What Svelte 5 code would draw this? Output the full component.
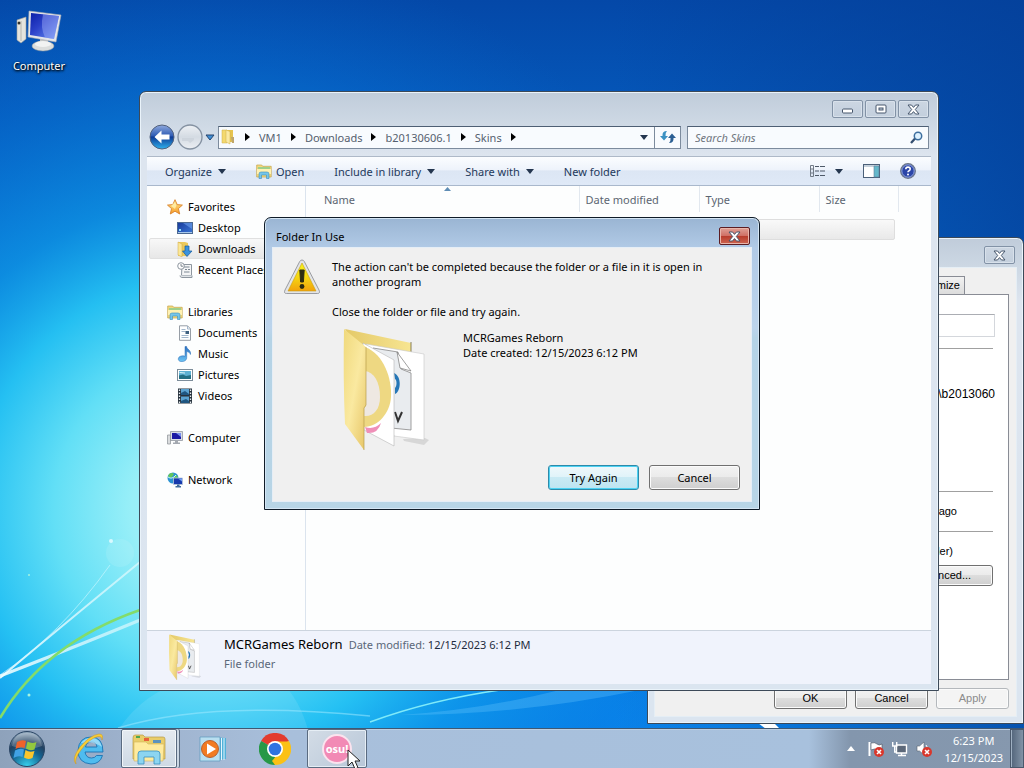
<script lang="ts">
	const crumbs = ['VM1', 'Downloads', 'b20130606.1', 'Skins'];

	const places = [
		{ label: 'Favorites', icon: 'star', items: [
			{ label: 'Desktop', icon: 'desktop' },
			{ label: 'Downloads', icon: 'downloads' },
			{ label: 'Recent Places', icon: 'recent' }
		] },
		{ label: 'Libraries', icon: 'library', items: [
			{ label: 'Documents', icon: 'document' },
			{ label: 'Music', icon: 'music' },
			{ label: 'Pictures', icon: 'picture' },
			{ label: 'Videos', icon: 'video' }
		] },
		{ label: 'Computer', icon: 'computer', items: [] },
		{ label: 'Network', icon: 'network', items: [] }
	];

	let selected = $state('Downloads');
	let query = $state('');
	let folderName = $state('');
</script>

{#snippet caret()}
	<svg class="caret" width="8" height="5" viewBox="0 0 8 5"><path d="M0 0h8L4 5z" fill="currentColor" /></svg>
{/snippet}

{#snippet cross()}
	<svg width="13" height="11" viewBox="0 0 13 11">
		<path d="M1 1h3.500l2 2.400L8.500 1H12L8.300 5.500 12 10H8.500l-2-2.400L4.500 10H1l3.700-4.500z" fill="#fff" stroke="#46566c" stroke-width="1" />
	</svg>
{/snippet}

{#snippet icon(name: string)}
	<svg class="icon" width="16" height="16" viewBox="0 0 16 16">
		{#if name === 'star'}
			<path d="M8 .7l2.200 4.900 5.200.5-4 3.500 1.300 5.400L8 12.200 3.300 15l1.200-5.400-4-3.500 5.300-.5z" fill="url(#g-star)" stroke="#d9822b" stroke-width=".9" />
			<path d="M8 3l1.400 3.500L8 10 4 7z" fill="#fff3b0" opacity=".8" />
		{:else if name === 'desktop'}
			<rect x=".5" y="2.500" width="15" height="11" fill="url(#g-screen)" stroke="#4c6a92" />
			<path d="M1 12h14v1H1z" fill="#a8c8ea" /><path d="M2 9h2v2H2z" fill="#8fe3ff" />
			<path d="M6 3h9v6z" fill="#6fa4ee" opacity=".6" />
		{:else if name === 'downloads'}
			<path d="M1 1h7l3 1v13H1z" fill="#ecc95a" /><path d="M1 1l4 2v13l-4-2z" fill="#fbe797" stroke="#cda640" stroke-width=".5" />
			<path d="M8 5h4v5h3l-5 5.500L5.500 10H8z" fill="#3a92dd" stroke="#155c9f" stroke-width=".7" />
		{:else if name === 'recent'}
			<path d="M5 2.500h9.500v11H4.500z" fill="#f4f5f6" stroke="#8d969f" />
			<path d="M6.500 5h6M8 7.500h2M11 7.500h2M7 10h5.500" stroke="#7c8893" />
			<circle cx="4" cy="4" r="3.300" fill="#fff" stroke="#8d969f" /><path d="M4 2v2.200h2" fill="none" stroke="#5f6a74" stroke-width=".8" />
			<path d="M3 13.500c0 2 2 2 2 2h10v-2" fill="#dfe3e7" stroke="#8d969f" />
		{:else if name === 'library'}
			<path d="M.7 2h5l1 1.300h8.500V14H.7z" fill="#f4da7e" stroke="#c3a34a" stroke-width=".7" />
			<path d="M2 4h12v2H2z" fill="#9fd08b" /><path d="M1 6h14v5H1z" fill="#fff1b2" />
			<path d="M3 15.500V11q0-2 2-2h6q2 0 2 2v4.500h-2.500V12h-5v3.500z" fill="#77c6e9" stroke="#3b8dbd" stroke-width=".6" />
		{:else if name === 'document'}
			<path d="M2.500 .8h8l3 3v11.500h-11z" fill="#fff" stroke="#8b939c" stroke-width=".9" />
			<path d="M10.500 1v3h3M4.500 4.500h4M4.500 6.500h4M4.500 10.500h7M4.500 12.500h7" fill="none" stroke="#8ba5bf" stroke-width=".8" />
			<path d="M8.500 6h3.500v3H8.500z" fill="#3f607f" />
		{:else if name === 'music'}
			<path d="M8 .5h1.600c.2 3 4.900 3.500 3.800 8-.5-2-2.200-2.800-3.700-3v6.300c0 4.600-8.400 5.200-8.400 1.200 0-2.800 4-3.800 6.700-2.700z" fill="url(#g-note)" stroke="#2a6cb4" stroke-width=".5" />
		{:else if name === 'picture'}
			<rect x=".5" y="2.500" width="15" height="11" fill="#fff" stroke="#7d8d9a" />
			<path d="M2 4h12v8H2z" fill="#5fb1d2" /><path d="M2 8.500l4-1 3 1.500 5-1V12H2z" fill="#246f83" /><path d="M3 5l5 .5v1L2 6z" fill="#d8f2f7" />
		{:else if name === 'video'}
			<path d="M1 .5h14v15H1z" fill="#26323d" /><path d="M4 1h8v6H4zM4 8.500h8V15H4z" fill="#5ba3d1" />
			<path d="M4 5l4-2 4 3v1H4zM4 13l5-2 3 2v2H4z" fill="#1f5680" />
			<path d="M2.500 1.500v14M13.500 1.500v14" stroke="#e7edf2" stroke-width="1.300" stroke-dasharray="1.500 1.500" />
		{:else if name === 'computer'}
			<path d="M.5 5h3v9h-3z" fill="#dadcde" stroke="#8b9096" stroke-width=".7" />
			<path d="M3.500 1.500h12v9h-12z" fill="#d9dde4" stroke="#868c96" stroke-width=".7" /><path d="M5 3h9v6H5z" fill="#1b1aa4" /><path d="M9 3h5v4z" fill="#7990ef" />
			<path d="M8 10.500h3v2h2v1.500H6v-1.500h2z" fill="#a4a9b1" />
		{:else if name === 'network'}
			<circle cx="6" cy="6" r="5.500" fill="#2b93d3" /><path d="M2 2q3-2 5 0L5 5 3 6 1 5zM6 5l4-2 1 4-4 3z" fill="#63c65b" />
			<path d="M1 5q4 3 8-2" fill="none" stroke="#c6f2ff" />
			<path d="M6.500 6h9v6.500h-9z" fill="#1639ad" stroke="#bac8da" stroke-width=".8" /><path d="M11 6.500h4v3z" fill="#6f9cf2" /><path d="M10 12.500h2.500V14H14v1.500H8.500V14H10z" fill="#406b9c" />
		{:else if name === 'folder'}
			<path d="M2 1h5v13H2z" fill="#f3d96f" stroke="#cfae49" stroke-width=".5" /><path d="M7 1h6v12H7z" fill="#e6c44f" />
			<path d="M6 1l4 1.500v12.500l-4-2z" fill="#fbeaa2" stroke="#cfae49" stroke-width=".5" /><path d="M11 8h3v6h-2z" fill="#bfa66a" />
		{/if}
	</svg>
{/snippet}

{#snippet bigFolder(cls: string)}
	<svg class={cls} viewBox="0 0 86 122">
		<path d="M60 111l22-1 4 2-5 5-20-4z" fill="#000" opacity=".1" />
		<path d="M2 1l66 14v14L20 30z" fill="url(#g-fold-back)" />
		<path d="M68 14v12" stroke="#6d6337" stroke-width=".8" />
		<path d="M23 16l58 10v86l-30-4z" fill="#fff" stroke="#c8c8c8" stroke-width=".6" />
		<path d="M30 20l25 4 3 17 10 4v57l-20-2z" fill="#e9ecef" stroke="#888" stroke-width=".8" />
		<path d="M54 24l14 19-11-3z" fill="#fff" stroke="#777" stroke-width=".7" />
		<path d="M51 45c8 3 7 19 1 21v-6c2-2 2-8 0-9z" fill="#2677b7" />
		<path d="M52 84l3 9 4-9" fill="none" stroke="#333" stroke-width="2" />
		<path d="M20 15l31 17v86l-30-16z" fill="#fff" stroke="#b7b7b7" stroke-width=".6" />
		<path d="M22 19c19 7 27 32 26 50-1 16-13 30-27 30z" fill="#eed882" />
		<path d="M22 43c9 1 15 11 15 26 0 13-7 20-16 19z" fill="#eee8e2" />
		<path d="M22 99q9 3 16-4-3 11-14 10z" fill="#ef8fb8" />
		<path d="M1 1l22 18v59l-2 2v42L2 96Q0 50 1 1z" fill="url(#g-fold-front)" />
		<path d="M23 19v58l-2 3v42" fill="none" stroke="#b89f4c" stroke-width=".7" />
	</svg>
{/snippet}

<main class="desktop">
	<svg class="wallpaper" viewBox="0 0 1024 768" preserveAspectRatio="none">
		<defs>
			<linearGradient id="g-sky" x1="0" y1="0" x2="0" y2="1">
				<stop offset="0" stop-color="#0448a8" />
				<stop offset=".3" stop-color="#0668cc" />
				<stop offset=".6" stop-color="#0b8ee6" />
				<stop offset="1" stop-color="#0a8cf8" />
			</linearGradient>
			<radialGradient id="g-glow" cx="210" cy="510" r="560" gradientUnits="userSpaceOnUse">
				<stop offset="0" stop-color="#a2f0fa" />
				<stop offset=".14" stop-color="#98eff8" />
				<stop offset=".28" stop-color="#62dff6" />
				<stop offset=".42" stop-color="#26c3f3" stop-opacity=".95" />
				<stop offset=".56" stop-color="#0f98e6" stop-opacity=".7" />
				<stop offset=".8" stop-color="#0670d4" stop-opacity=".4" />
				<stop offset="1" stop-color="#0664c6" stop-opacity="0" />
			</radialGradient>
			<linearGradient id="g-right" x1="0" x2="1">
				<stop offset=".6" stop-color="#043f98" stop-opacity="0" />
				<stop offset="1" stop-color="#043f98" stop-opacity=".75" />
			</linearGradient>
			<linearGradient id="g-beam" x1="0" x2="1"><stop offset="0" stop-color="#f0fdff" stop-opacity=".9" /><stop offset="1" stop-color="#fff" stop-opacity=".5" /></linearGradient>
			<linearGradient id="g-star" x1="0" y1="0" x2="0" y2="1"><stop offset="0" stop-color="#ffec91" /><stop offset="1" stop-color="#f79b26" /></linearGradient>
			<linearGradient id="g-screen" x1="0" y1="0" x2="1" y2="1"><stop offset="0" stop-color="#173a9b" /><stop offset="1" stop-color="#3c78d8" /></linearGradient>
			<linearGradient id="g-note" x1="0" y1="0" x2="0" y2="1"><stop offset="0" stop-color="#2d6fbf" /><stop offset="1" stop-color="#6cc4f5" /></linearGradient>
			<linearGradient id="g-fold-front" x1="0" y1="0" x2="1" y2="1"><stop offset="0" stop-color="#f0d97c" /><stop offset=".5" stop-color="#fae9a0" /><stop offset="1" stop-color="#e6c465" /></linearGradient>
			<linearGradient id="g-fold-back" x1="0" y1="0" x2="1" y2="0"><stop offset="0" stop-color="#e4c968" /><stop offset="1" stop-color="#f7e592" /></linearGradient>
			<linearGradient id="g-monitor" x1="0" y1="0" x2="1" y2="1"><stop offset="0" stop-color="#0a1fa8" /><stop offset=".4" stop-color="#2a40c8" /><stop offset="1" stop-color="#6d92f4" /></linearGradient>
			<radialGradient id="g-orb" cx=".5" cy="1" r=".95"><stop offset="0" stop-color="#38d4f0" /><stop offset=".5" stop-color="#14628f" /><stop offset=".75" stop-color="#23405f" /><stop offset="1" stop-color="#8fa6ba" /></radialGradient>
			<linearGradient id="g-back" x1="0" y1="0" x2="0" y2="1"><stop offset="0" stop-color="#8fa9dd" /><stop offset=".45" stop-color="#2f5cb4" /><stop offset=".5" stop-color="#0e3a95" /><stop offset="1" stop-color="#2fb2ee" /></linearGradient>
			<linearGradient id="g-fwd" x1="0" y1="0" x2="0" y2="1"><stop offset="0" stop-color="#eef1f5" /><stop offset=".5" stop-color="#d4dbe3" /><stop offset="1" stop-color="#eceff3" /></linearGradient>
			<linearGradient id="g-warn" x1="0" y1="0" x2="0" y2="1"><stop offset="0" stop-color="#f8f51c" /><stop offset=".5" stop-color="#f5d713" /><stop offset="1" stop-color="#f2a20c" /></linearGradient>
		</defs>
		<rect width="1024" height="768" fill="url(#g-sky)" />
		<rect width="1024" height="768" fill="url(#g-glow)" />
		<rect width="1024" height="768" fill="url(#g-right)" />
		<path d="M118 730Q145 690 190 680H280Q300 700 308 730z" fill="#fff" opacity=".1" />
		<path d="M0 678Q45 640 140 562" fill="none" stroke="url(#g-beam)" stroke-width="2" />
		<path d="M0 675Q60 635 110 565" fill="none" stroke="#d5f8ff" stroke-width="1" opacity=".6" />
		<path d="M0 676Q80 645 145 618" fill="none" stroke="url(#g-beam)" stroke-width="3" />
		<path d="M0 718Q45 643 140 610" fill="none" stroke="#83dc6a" stroke-width="2.500" />
		<path d="M118 728Q210 700 370 716" fill="none" stroke="#a5ecff" stroke-width="1.500" opacity=".5" />
		<path d="M370 722Q430 700 500 690" fill="none" stroke="#7feaf9" stroke-width="1.500" />
		<path d="M400 715Q520 715 640 690H560Q480 710 400 715z" fill="#6cc9ff" opacity=".3" />
		<path d="M758 723h16l6 6h-14z" fill="#fff" />
		<circle cx="111" cy="541" r="2" fill="#d8faff" /><circle cx="29" cy="575" r="1" fill="#a5f3e0" /><circle cx="29" cy="695" r="1.500" fill="#a5f3e0" /><circle cx="120" cy="553" r="14" fill="#fff" opacity=".1" />
	</svg>

	<a class="shortcut" href="#computer">
		<svg width="46" height="42" viewBox="0 0 46 42">
			<path d="M1 10l9-3v22l-5 4-4-3z" fill="#e5e4dd" stroke="#9fa19e" stroke-width=".6" /><path d="M5 11v20" stroke="#b6b6af" /><circle cx="3" cy="13" r="1.500" fill="#31322e" />
			<ellipse cx="27" cy="36" rx="11" ry="5" fill="#dcdedd" stroke="#989c9b" stroke-width=".5" /><path d="M24 27h8v9h-8z" fill="#c2c5c5" /><ellipse cx="27" cy="34" rx="8" ry="3" fill="#f2f3f2" />
			<path d="M13 1l32 4-5 27-28-5z" fill="#e4e6ea" stroke="#a7abb3" stroke-width=".6" /><path d="M15 3l28 3-5 23-24-4z" fill="url(#g-monitor)" /><path d="M27 4.300l16 1.700-5 23-9-1.500q-5-10-2-23z" fill="#aebcff" opacity=".4" />
		</svg>
		<span>Computer</span>
	</a>

	<section class="window properties">
		<div class="caption"><button class="frame-button" aria-label="Close properties">{@render cross()}</button></div>
		<div class="prop-body">
			<div class="tabs"><button>Customize</button></div>
			<div class="tab-page">
				<input aria-label="Folder name" bind:value={folderName} />
				<hr />
				<p class="location">Downloads\b2013060</p>
				<hr />
				<p class="created">5 minutes ago</p>
				<hr />
				<p class="attributes">in folder)</p>
				<button class="push advanced">Advanced...</button>
			</div>
			<div class="prop-buttons">
				<button class="push">OK</button>
				<button class="push">Cancel</button>
				<button class="push" disabled>Apply</button>
			</div>
		</div>
	</section>

	<section class="window explorer">
		<div class="caption">
			<button class="frame-button" aria-label="Minimize"><svg width="13" height="9" viewBox="0 0 13 9"><rect x="1.500" y="4" width="10" height="4" rx="1" fill="#fff" stroke="#46566c" /></svg></button>
			<button class="frame-button" aria-label="Maximize"><svg width="12" height="10" viewBox="0 0 12 10"><rect x="1" y="1" width="10" height="8" rx="1" fill="#fff" stroke="#46566c" /><rect x="4" y="4" width="4" height="2" fill="#c7d3e0" stroke="#46566c" /></svg></button>
			<button class="frame-button" aria-label="Close">{@render cross()}</button>
		</div>

		<div class="nav-row">
			<button class="round" aria-label="Back">
				<svg width="26" height="26" viewBox="0 0 26 26"><circle cx="13" cy="13" r="12" fill="url(#g-back)" stroke="#52617c" /><path d="M5.500 13l7-6.500v4h8v5h-8v4z" fill="#fff" /></svg>
			</button>
			<button class="round" aria-label="Forward">
				<svg width="26" height="26" viewBox="0 0 26 26"><circle cx="13" cy="13" r="12" fill="url(#g-fwd)" stroke="#8592a2" stroke-width="1.300" /><path d="M5 14h12v2l-4 3-2-2H5z" fill="#c9d0d8" opacity=".7" /></svg>
			</button>
			<button class="recent-pages" aria-label="Recent pages"><svg width="10" height="7" viewBox="0 0 10 7"><path d="M1 1h8L5 6z" fill="#3f8fd6" stroke="#26456e" /></svg></button>
			<div class="address">
				{@render icon('folder')}
				<svg class="chevron" width="5" height="8" viewBox="0 0 5 8"><path d="M0 0l5 4-5 4z" /></svg>
				{#each crumbs as crumb}
					<button>{crumb}</button>
					<svg class="chevron" width="5" height="8" viewBox="0 0 5 8"><path d="M0 0l5 4-5 4z" /></svg>
				{/each}
				<button class="history" aria-label="Previous locations">{@render caret()}</button>
				<button class="refresh" aria-label="Refresh">
					<svg width="16" height="14" viewBox="0 0 16 14"><path d="M7 1Q2 1 2.500 6H0l4 4.500L8 6H5.500Q5 3 7 1z" fill="#3b91c2" /><path d="M9 13q5 0 4.500-5H16l-4-4.500L8 8h2.500q.5 3-1.500 5z" fill="#2b5f93" /></svg>
				</button>
			</div>
			<div class="search">
				<input aria-label="Search Skins" placeholder="Search Skins" bind:value={query} />
				<svg width="13" height="13" viewBox="0 0 13 13"><path d="M1 12l4.500-5" stroke="#344e70" stroke-width="2.300" /><circle cx="8" cy="5" r="3.700" fill="#dff2ff" stroke="#3e6f9f" stroke-width="1.500" /></svg>
			</div>
		</div>

		<div class="toolbar">
			<button>Organize {@render caret()}</button>
			<button class="open">{@render icon('library')} Open</button>
			<button>Include in library {@render caret()}</button>
			<button>Share with {@render caret()}</button>
			<button>New folder</button>
			<div class="view-tools">
				<button aria-label="Change your view"><svg width="16" height="14" viewBox="0 0 16 14"><path d="M1.500 1.500h3v11h-3zM1.500 5h3M1.500 9h3" fill="none" stroke="#727b87" /><path d="M6 2.500h4M11 2.500h5M6 7h4M11 7h5M6 11.500h4M11 11.500h5" stroke="#4e5968" /></svg></button>
				<button aria-label="More view options">{@render caret()}</button>
				<button aria-label="Show the preview pane"><svg width="17" height="14" viewBox="0 0 17 14"><rect x=".5" y=".5" width="16" height="13" fill="#fff" stroke="#4b6079" /><path d="M1 2h15" stroke="#8ba2b8" /><path d="M11 2h5v11h-5z" fill="#65b8cb" stroke="#5f829b" stroke-width=".6" /></svg></button>
				<button aria-label="Get help"><svg width="16" height="16" viewBox="0 0 16 16"><circle cx="8" cy="8" r="7.300" fill="#2b45a8" stroke="#6c7789" stroke-width="1.300" /><circle cx="8" cy="8" r="6.200" fill="none" stroke="#a9bbe8" stroke-width=".8" /><path d="M5.800 6.300q0-2.200 2.200-2.200t2.200 1.900q0 1.300-1.400 1.900-.8.400-.8 1.400" fill="none" stroke="#fff" stroke-width="1.600" /><circle cx="8" cy="11.600" r="1" fill="#fff" /></svg></button>
			</div>
		</div>

		<div class="content">
			<nav>
				{#each places as place}
					<div class="group">
						<a class="place" href="#{place.icon}">{@render icon(place.icon)}{place.label}</a>
						{#each place.items as item}
							<a class="place child" class:selected={selected === item.label} href="#{item.icon}" onclick={() => (selected = item.label)}>
								{@render icon(item.icon)}{item.label}
							</a>
						{/each}
					</div>
				{/each}
			</nav>
			<div class="files">
				<svg class="sort" width="7" height="4" viewBox="0 0 7 4"><path d="M0 4l3.500-4L7 4z" fill="#5f8db5" /></svg>
				<table>
					<thead>
						<tr><th class="name">Name</th><th class="medium">Date modified</th><th class="medium">Type</th><th class="size">Size</th></tr>
					</thead>
					<tbody>
						<tr><td colspan="4"><div class="row"></div></td></tr>
					</tbody>
				</table>
			</div>
		</div>

		<footer class="details">
			{@render bigFolder('details-thumb')}
			<div>
				<p><strong>MCRGames Reborn</strong><span>Date modified:</span> <b>12/15/2023 6:12 PM</b></p>
				<p>File folder</p>
			</div>
		</footer>
	</section>

	<section class="dialog" role="dialog" aria-labelledby="dialog-title">
		<header>
			<h1 id="dialog-title">Folder In Use</h1>
			<button class="close" aria-label="Close dialog">{@render cross()}</button>
		</header>
		<div class="dialog-body">
			<div class="message">
				<svg width="38" height="36" viewBox="0 0 38 36">
					<path d="M19 1q1.500 0 2.300 1.500L36 31q1.500 3.500-1.500 3.500h-31Q.5 34.500 2 31L16.700 2.500Q17.500 1 19 1z" fill="#e3e4e6" stroke="#85888e" stroke-width=".8" />
					<path d="M19 4l14 28H5z" fill="url(#g-warn)" stroke="#c9a010" stroke-width=".6" />
					<path d="M16.800 11h4.400l-.8 12h-2.800z" fill="#2d2c12" stroke="#2d2c12" /><circle cx="19" cy="27.500" r="2.400" fill="#2d2c12" />
				</svg>
				<div>
					<p>The action can't be completed because the folder or a file in it is open in another program</p>
					<p>Close the folder or file and try again.</p>
				</div>
			</div>
			<div class="subject">
				{@render bigFolder('dialog-thumb')}
				<p>MCRGames Reborn<br />Date created: 12/15/2023 6:12 PM</p>
			</div>
			<div class="actions">
				<button class="push default">Try Again</button>
				<button class="push">Cancel</button>
			</div>
		</div>
	</section>

	<footer class="taskbar">
		<button class="start" aria-label="Start">
			<svg width="38" height="38" viewBox="0 0 38 38">
				<circle cx="19" cy="19" r="17.500" fill="url(#g-orb)" stroke="#2a4564" /><path d="M4 16Q6 3 19 3t15 13Q19 22 4 16z" fill="#fff" opacity=".22" />
				<path d="M9 12q5-3 9-1l-1.500 7q-4.500-2-9 1z" fill="#f0622a" /><path d="M19.500 11.500q4 2.500 9 .5l-2 7.500q-4.500 2-8.500-1z" fill="#93c83e" />
				<path d="M7 20.500q5-3 9-1L14.500 27q-4-2-9 1z" fill="#41a2e4" /><path d="M17.500 20q4 3 9 1l-2 7q-5 2-8.500-.5z" fill="#fbc52c" />
			</svg>
		</button>
		<button class="task" aria-label="Internet Explorer">
			<svg width="32" height="32" viewBox="0 0 32 32">
				<path d="M30 19H12q1 6 6.500 6 3.500 0 5-2.500h6Q27 31 18 31 5 30 5 17.500 6 4 18 4q12 0 12 15zM12.500 14H24q-.5-5-5.500-5-5 0-6 5z" fill="#4fbcef" stroke="#1c73b2" stroke-width=".9" fill-rule="evenodd" />
				<path d="M8 10Q12 5 18 5q9 0 11 9-8-6-21-4z" fill="#c6ecfb" opacity=".6" />
				<path d="M3 31Q-2 26 7 14 17 2 26 1q5 0 3 6 0-4-4-3.500Q17 5 8 17q-7 9-5 14z" fill="#f7cd35" stroke="#ce9420" stroke-width=".5" />
			</svg>
		</button>
		<button class="task active stacked" aria-label="Windows Explorer">
			<svg width="34" height="32" viewBox="0 0 34 32">
				<path d="M1 5q0-3 2-3h8l2 2h18q2 0 2 2v20H1z" fill="#e9cd69" stroke="#b79b48" stroke-width=".7" /><path d="M4 3h4v2H4z" fill="#4ea650" /><path d="M12 5h5v3h-5z" fill="#e8613a" /><path d="M21 7h8v3h-8z" fill="#5d93bd" />
				<path d="M2 9h12l2 2h16l-1 17H2z" fill="#ffeb9e" stroke="#d1b45b" stroke-width=".6" />
				<path d="M6 31V21q0-3 3-3h16q3 0 3 3v10h-6v-7H12v7z" fill="#8cd5f1" stroke="#378fc0" stroke-width=".8" />
			</svg>
		</button>
		<button class="task" aria-label="Windows Media Player">
			<svg width="28" height="26" viewBox="0 0 28 26">
				<path d="M8 1l19 1v21l-19 2z" fill="#51b1d9" /><path d="M22.500 2v22M25 2v22" stroke="#e5f7ff" /><path d="M1 1h20v24H1z" fill="#b9dff0" stroke="#5b9abd" stroke-width=".7" />
				<circle cx="11" cy="13" r="8.500" fill="#f27b21" stroke="#b9612e" /><path d="M8 7.500l9 5.500-9 5.500z" fill="#fff" />
			</svg>
		</button>
		<button class="task" aria-label="Google Chrome">
			<svg width="32" height="32" viewBox="0 0 32 32">
				<path d="M16 16L2.100 8A16 16 0 0 1 29.900 8z" fill="#e33b2e" /><path d="M16 16l13.900-8A16 16 0 0 1 16 32z" fill="#fbc116" /><path d="M16 16v16A16 16 0 0 1 2.100 8z" fill="#279847" />
				<path d="M16 8.500h14L27 14H16z" fill="#fbc116" /><path d="M9.500 20L3 9l4 2 6 12z" fill="#279847" /><path d="M22.500 20L16 31.900l-3-4 5-6z" fill="#fbc116" />
				<circle cx="16" cy="16" r="8" fill="#fff" /><circle cx="16" cy="16" r="6.300" fill="#2f73e1" />
			</svg>
		</button>
		<button class="task active osu"><span>osu!</span></button>
		<div class="tray">
			<svg width="8" height="5" viewBox="0 0 8 5"><path d="M0 5l4-5 4 5z" fill="#fff" /></svg>
			<svg width="16" height="16" viewBox="0 0 16 16"><path d="M1.500 1v14" stroke="#fff" stroke-width="2" /><path d="M3 2q4-1 6 1t5 0v6q-3 2-5 0T3 9z" fill="#fff" stroke="#4a5360" stroke-width=".6" /><circle cx="11" cy="11" r="5" fill="#d9372c" /><path d="M9 9l4 4M13 9l-4 4" stroke="#fff" stroke-width="1.600" /></svg>
			<svg width="16" height="16" viewBox="0 0 16 16"><path d="M4.500 4h10v8h-10z" fill="#5c6879" stroke="#fff" stroke-width="1.400" /><path d="M6 14.500h8M9.500 12v3" stroke="#fff" stroke-width="1.500" /><path d="M.7 1v4h4V1M2.700 5v6h2" fill="none" stroke="#fff" stroke-width="1.400" /></svg>
			<svg width="16" height="16" viewBox="0 0 16 16"><path d="M1 5h2.500L8 1v13l-4.500-4H1z" fill="#fff" stroke="#58626f" stroke-width=".6" /><path d="M10 4q2 2 1 5" fill="none" stroke="#fff" /><circle cx="11" cy="11" r="5" fill="#d9372c" /><path d="M9 9l4 4M13 9l-4 4" stroke="#fff" stroke-width="1.600" /></svg>
			<time>6:23 PM<br />12/15/2023</time>
		</div>
		<button class="show-desktop" aria-label="Show desktop"></button>
	</footer>

	<svg class="pointer" width="14" height="21" viewBox="0 0 14 21"><path d="M1 1v16l4-4 3 7 3-1.300-3-6.700h5z" fill="#fff" stroke="#222" /></svg>
</main>

<style>
	:global(body) {
		font-family: 'Segoe UI', 'Noto Sans', sans-serif;
		font-size: 11px;
		line-height: 15px;
		color: #000;
	}

	.desktop {
		position: relative;
		display: flex;
		flex-direction: column;
		min-height: 100vh;
		overflow: hidden;
	}

	.desktop * {
		box-sizing: border-box;
	}

	button,
	input {
		font: inherit;
		color: inherit;
		margin: 0;
		padding: 0;
		border: 0;
		background: none;
	}

	p,
	h1 {
		margin: 0;
		font: inherit;
	}

	a {
		color: inherit;
		text-decoration: none;
	}

	svg {
		display: block;
		flex: none;
	}

	.wallpaper {
		position: absolute;
		width: 100%;
		height: 100%;
	}

	.shortcut {
		position: relative;
		display: flex;
		flex-direction: column;
		align-items: center;
		gap: 6px;
		width: 78px;
		padding-top: 10px;
		color: #fff;
		text-shadow: 1px 1px 2px #000, 0 1px 3px #000;
	}

	/* Window frames */
	.window {
		position: absolute;
		display: flex;
		flex-direction: column;
		padding: 0 6px 6px;
		border: 1px solid #3c4958;
		border-radius: 7px 7px 0 0;
		background: linear-gradient(#c0ccda, #cdd8e4 30px, #dde5ef 64px, #dbe5f0);
		box-shadow: inset 0 0 0 1px #eaf3fa;
	}

	.caption {
		display: flex;
		justify-content: flex-end;
		gap: 2px;
		padding: 8px 2px 0 0;
	}

	.frame-button {
		display: grid;
		place-items: center;
		width: 31px;
		height: 18px;
		border: 1px solid #8292a6;
		border-radius: 2px;
		background: linear-gradient(#ccd6e2, #c3cfdd);
		box-shadow: inset 0 0 0 1px #d8e1eb;
	}

	.explorer {
		top: 91px;
		left: 139px;
		width: 800px;
		padding: 0 7px 6px;
	}

	.nav-row {
		display: flex;
		align-items: center;
		gap: 2px;
		padding: 6px 2px;
	}

	.recent-pages {
		padding-right: 1px;
	}

	.address,
	.search {
		display: flex;
		align-items: center;
		height: 23px;
		border: 1px solid #7c8b9d;
		border-top-color: #4e5f74;
		background: #f8fbfe;
	}

	.address {
		flex: 1;
		padding-left: 1px;
		color: #55606e;
	}

	.address .chevron {
		margin: 0 9px;
		fill: #000;
	}

	.address .history {
		margin-left: auto;
		padding: 0 6px;
		color: #1b2330;
	}

	.refresh {
		display: grid;
		place-items: center;
		align-self: stretch;
		width: 26px;
		border-left: 1px solid #7c8b9d;
	}

	.search {
		width: 242px;
		margin-left: 4px;
		padding: 0 5px 0 7px;
	}

	.search input {
		flex: 1;
		min-width: 0;
		outline: 0;
	}

	.search input::placeholder {
		color: #6f767e;
		font-style: italic;
		opacity: 1;
	}

	.toolbar {
		display: flex;
		align-items: center;
		gap: 30px;
		height: 30px;
		padding: 0 15px 0 18px;
		border-top: 1px solid #aeb9c8;
		border-bottom: 1px solid #a9b8cc;
		background: linear-gradient(#fbfdff, #eef3fb 45%, #dce6f4 50%, #dfe9f7);
		color: #1e395b;
	}

	.toolbar button {
		display: flex;
		align-items: center;
		gap: 6px;
	}

	.toolbar .open {
		gap: 4px;
	}

	.caret {
		color: #24364f;
	}

	.view-tools {
		display: flex;
		align-items: center;
		gap: 20px;
		margin-left: auto;
	}

	.view-tools button:first-child {
		margin-right: -10px;
	}

	.content {
		display: flex;
		height: 444px;
		background: #fdfefe;
	}

	nav {
		display: flex;
		flex-direction: column;
		gap: 21px;
		width: 159px;
		padding-top: 10px;
		border-right: 1px solid #dbe4ee;
		overflow: hidden;
	}

	.place {
		display: flex;
		align-items: center;
		gap: 5px;
		height: 21px;
		padding-left: 20px;
		white-space: nowrap;
	}

	.place.child {
		margin-left: 2px;
		padding-left: 28px;
	}

	.place.selected {
		border: 1px solid #e0e0e0;
		border-radius: 2px 0 0 2px;
		padding-left: 27px;
		background: linear-gradient(#f8f8f8, #e7e7e7);
	}

	.files {
		position: relative;
		flex: 1;
	}

	.sort {
		position: absolute;
		top: 1px;
		left: 138px;
	}

	table {
		border-collapse: collapse;
		table-layout: fixed;
		width: 593px;
	}

	th {
		height: 26px;
		padding: 0 0 0 6px;
		border-right: 1px solid #e2e8ef;
		font-weight: normal;
		text-align: left;
		color: #5c6672;
	}

	th.name {
		width: 273px;
		padding-left: 18px;
	}

	th.medium {
		width: 120px;
	}

	td {
		padding: 7px 4px 0 12px;
	}

	.row {
		height: 21px;
		border: 1px solid #dedede;
		border-radius: 2px;
		background: linear-gradient(#f9f9f9, #e9e9e9);
	}

	.details {
		display: flex;
		align-items: flex-start;
		gap: 21px;
		height: 54px;
		padding: 3px 20px;
		border-top: 1px solid #ccd4de;
		background: #f0f3fc;
		color: #5a6779;
	}

	.details-thumb {
		width: 36px;
		height: 46px;
	}

	.details p {
		line-height: 18px;
		padding-top: 1px;
	}

	.details strong {
		margin-right: 6px;
		font-size: 13px;
		font-weight: normal;
		color: #000;
	}

	.details b {
		font-weight: normal;
		color: #1e2b40;
	}

	/* Properties window */
	.properties {
		top: 237px;
		left: 647px;
		width: 377px;
		font-family: 'Liberation Sans', Arial, sans-serif;
	}

	.prop-body {
		margin-top: 3px;
		padding: 8px 7px 7px;
		border: 1px solid #e5eef5;
		background: #f0f0f0;
	}

	.tabs {
		display: flex;
		justify-content: flex-end;
		padding-right: 44px;
	}

	.tabs button {
		height: 18px;
		padding: 0 4px;
		border: 1px solid #898c95;
		border-bottom: 0;
		background: linear-gradient(#f2f2f2, #dcdcdc);
	}

	.tab-page {
		display: flex;
		flex-direction: column;
		align-items: flex-end;
		height: 386px;
		padding: 19px 13px 0;
		border: 1px solid #898c95;
		background: #fff;
	}

	.tab-page input {
		width: 100%;
		height: 23px;
		border: 1px solid #d4d7dc;
		border-top-color: #abadb3;
	}

	hr {
		align-self: stretch;
		height: 1px;
		margin: 11px 2px 11px 0;
		border: 0;
		background: #a0a0a0;
	}

	.location {
		padding: 27px 0 78px;
		font-size: 12px;
	}

	.created {
		padding-right: 38px;
		margin: 1px 0;
	}

	.attributes {
		padding: 1px 42px 6px 0;
	}

	.push {
		border: 1px solid #707070;
		border-radius: 3px;
		background: linear-gradient(#f3f3f3, #ebebeb 48%, #dddddd 50%, #cfcfcf);
		box-shadow: inset 0 0 0 1px #fbfbfb;
	}

	.push:disabled {
		border-color: #b4b8bc;
		background: #f4f4f4;
		color: #8b8b8b;
	}

	.advanced {
		width: 102px;
		height: 21px;
		margin-right: 2px;
	}

	.prop-buttons {
		display: flex;
		justify-content: flex-end;
		gap: 8px;
		padding-top: 8px;
	}

	.prop-buttons .push {
		width: 73px;
		height: 21px;
	}

	/* Message dialog */
	.dialog {
		position: absolute;
		top: 217px;
		left: 264px;
		width: 496px;
		padding: 0 7px 7px;
		border: 1px solid #101c28;
		border-radius: 7px 7px 0 0;
		background: linear-gradient(#9ab5d3, #b1cae6 30px, #bcd4ec 110px, #b5d3e6 120px, #b8d5e6);
		box-shadow: inset 0 0 0 1px #d5e6f4;
	}

	.dialog header {
		display: flex;
		align-items: center;
		justify-content: space-between;
		height: 29px;
		padding: 7px 2px 0 4px;
	}

	.close {
		display: grid;
		place-items: center;
		width: 31px;
		height: 18px;
		border: 1px solid #5c1c22;
		border-radius: 2px;
		background: linear-gradient(#dfa096, #d07065 48%, #b83b2b 50%, #cd6551);
		box-shadow: inset 0 0 0 1px #e9b5aa;
	}

	.dialog-body {
		padding: 11px 11px 11px 10px;
		border: 1px solid #e6eef6;
		background: #f0f0f0;
	}

	.message {
		display: flex;
		gap: 11px;
		padding-right: 20px;
	}

	.message p {
		margin-bottom: 15px;
	}

	.message p:last-child {
		margin: 0;
	}

	.subject {
		display: flex;
		gap: 34px;
		padding: 9px 0 15px 60px;
	}

	.subject p {
		padding-top: 2px;
	}

	.dialog-thumb {
		width: 86px;
		height: 122px;
	}

	.actions {
		display: flex;
		justify-content: flex-end;
		gap: 10px;
	}

	.actions .push {
		width: 91px;
		height: 25px;
	}

	.push.default {
		border-color: #2e8aa9;
		background: linear-gradient(#eff8fb, #e0f3f9 48%, #c9eaf4 50%, #bee4f1);
		box-shadow: inset 0 0 0 1px #4cd2f3;
	}

	/* Taskbar */
	.taskbar {
		position: relative;
		display: flex;
		align-items: center;
		height: 40px;
		margin-top: auto;
		border-top: 1px solid #3f5873;
		background: linear-gradient(90deg, #8ea2bb, #9db1cc 12%, #a8bfdb 28%, #a8c1dd 79%, #8396ad 83%, #8698ae);
		box-shadow: inset 0 1px #bccfe3;
	}

	.start {
		padding: 0 4px 0 8px;
	}

	.task {
		display: grid;
		place-items: center;
		width: 60px;
		height: 39px;
		margin-right: 2px;
	}

	.start + .task {
		margin-left: 9px;
	}

	.task.active {
		border: 1px solid #5a6b80;
		border-radius: 2px;
		background: linear-gradient(135deg, #d3dce6, #b8c7d8);
		box-shadow: inset 0 0 0 1px #e6eef5;
	}

	.task.stacked {
		width: 56px;
		background: linear-gradient(#e4eaf0, #ced9e4);
		box-shadow: inset 0 0 0 1px #f2f6f9, 2px 0 #cbd7e3, 3px 0 #5a6b80;
		margin-right: 6px;
	}

	.osu span {
		display: grid;
		place-items: center;
		width: 30px;
		height: 30px;
		border: 2px solid #fbe3ee;
		border-radius: 50%;
		background: #f28ab5;
		color: #fff;
		font-weight: bold;
	}

	.tray {
		display: flex;
		align-items: center;
		gap: 8px;
		margin-left: auto;
		padding-right: 7px;
	}

	.tray svg:first-child {
		margin-right: 5px;
	}

	.tray time {
		margin-left: 4px;
		line-height: 17px;
		text-align: center;
		color: #fff;
	}

	.show-desktop {
		width: 14px;
		height: 39px;
		border: 1px solid #4a596c;
		background: linear-gradient(90deg, #52647a, #8293a6);
		box-shadow: inset 1px 0 #9fb0c2;
	}

	.pointer {
		position: absolute;
		top: 749px;
		left: 347px;
	}
</style>
